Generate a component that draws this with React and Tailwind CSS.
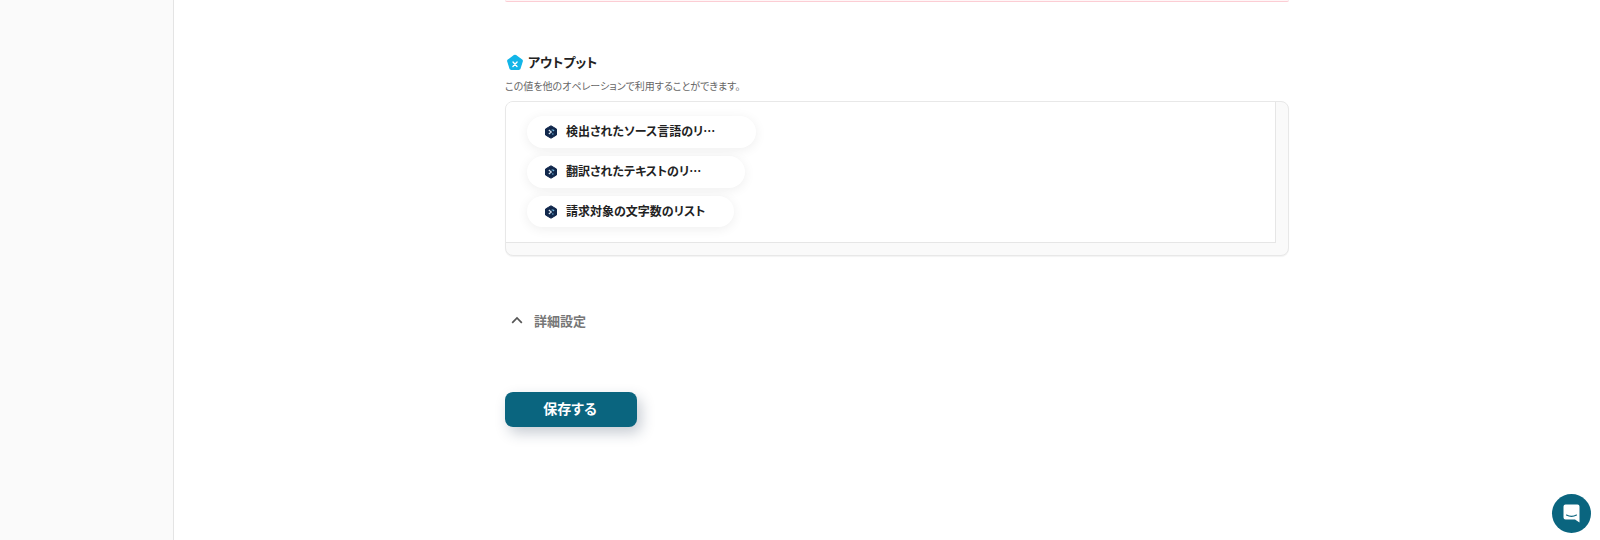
function PentagonIcon() {
  return (
    <svg width="18" height="18" viewBox="0 0 18 18" className="ml-[1px] shrink-0">
      <path d="M7.900 1.100a1.800 1.800 0 0 1 2.200 0l6.100 4.500c.6.400.9 1.200.6 1.900l-2.300 7.200c-.2.700-.9 1.200-1.700 1.200H5.200c-.8 0-1.500-.5-1.700-1.200L1.200 7.500c-.3-.7 0-1.500.6-1.900l6.100-4.500Z" fill="#12b5e8" />
      <path d="M7 8l4 4.500M11.100 8 6.900 12.500" stroke="#fff" strokeWidth="1.300" strokeLinecap="round" />
    </svg>
  );
}

function HexIcon() {
  return (
    <svg width="14" height="14" viewBox="0 0 14 14" className="shrink-0">
      <path d="M7 .8 12.500 4v6L7 13.200 1.500 10V4L7 .8Z" fill="#12284c" stroke="#12284c" strokeLinejoin="round" />
      <path d="M4.800 5 7.300 7 4.800 9" fill="none" stroke="#dfeaf3" strokeWidth="1.100" />
      <path d="M7.600 5h1.500l1 1M8 9h1.500" fill="none" stroke="#6fb8dd" strokeWidth="1.100" />
    </svg>
  );
}

function Chip({ label, className }) {
  return (
    <div className={`flex items-center rounded-full bg-white pl-[17px] shadow-[0_2px_12px_rgba(0,0,0,0.07)] ${className}`}>
      <HexIcon />
      <span className="ml-[8px] -translate-y-px whitespace-nowrap text-[12px] font-bold leading-none text-[#222] [font-feature-settings:'palt']">{label}</span>
    </div>
  );
}

export default function App() {
  return (
    <div className="relative flex h-[540px] w-[1600px] overflow-hidden bg-white font-['Noto_Sans_CJK_JP','Noto_Sans',sans-serif]">
      <aside className="h-full w-[174px] shrink-0 border-r border-[#e4e4e4] bg-[#fafafa]" />
      <main className="flex-1 pl-[331px]">
        <div className="h-[2px] w-[784px] rounded-b-[8px] border-b border-[#fccdd4] bg-[#fff6f7]" />

        <div className="mt-[52px] flex h-[18px] items-center">
          <PentagonIcon />
          <h2 className="ml-[4px] -translate-y-[2px] text-[13px] font-bold leading-none text-[#222] [font-feature-settings:'palt']">アウトプット</h2>
        </div>
        <p className="mt-[6px] text-[10px] leading-[15px] text-[#666] [font-feature-settings:'palt']">この値を他のオペレーションで利用することができます。</p>

        <div className="mt-[8px] flex h-[155px] w-[784px] flex-col overflow-hidden rounded-[8px] border border-[#e8e8e8] bg-[#fafafa] shadow-[0_1px_1px_rgba(0,0,0,0.05)]">
          <div className="mr-[12px] flex h-[141px] flex-col items-start gap-[8px] border-r border-b border-[#e6e6e6] bg-white pt-[14px] pl-[21px]">
            <Chip label="検出されたソース言語のリ⋯" className="h-[32px] w-[229px]" />
            <Chip label="翻訳されたテキストのリ⋯" className="h-[32px] w-[218px]" />
            <Chip label="請求対象の文字数のリスト" className="h-[31px] w-[207px]" />
          </div>
        </div>

        <div className="mt-[53px] flex h-[22px] items-center">
          <svg width="14" height="14" viewBox="0 0 14 14" className="ml-[5px] shrink-0">
            <path d="M2.200 9.800 7 5l4.800 4.800" fill="none" stroke="#555" strokeWidth="1.700" />
          </svg>
          <span className="ml-[10px] text-[13px] font-bold leading-none text-[#777]">詳細設定</span>
        </div>

        <button className="mt-[61px] flex h-[35px] w-[132px] items-center justify-center rounded-[8px] bg-[#0a657f] pr-[2px] pb-[3px] text-[14px] font-bold text-white shadow-[4px_6px_14px_rgba(30,50,80,0.25)] [font-feature-settings:'palt']">
          保存する
        </button>
      </main>

      <div className="absolute top-[494px] left-[1552px] flex h-[39px] w-[39px] items-center justify-center rounded-full bg-[#0a657f]">
        <svg width="17" height="19" viewBox="0 0 17 19">
          <path d="M2.500 .5h12a2 2 0 0 1 2 2v16l-4.500-3h-9.500a2 2 0 0 1-2-2V2.500a2 2 0 0 1 2-2Z" fill="#fff" />
          <path d="M3.500 11c3 1.600 7 1.600 10 0" fill="none" stroke="#0a657f" strokeWidth="1.100" strokeLinecap="round" />
        </svg>
      </div>
    </div>
  );
}
